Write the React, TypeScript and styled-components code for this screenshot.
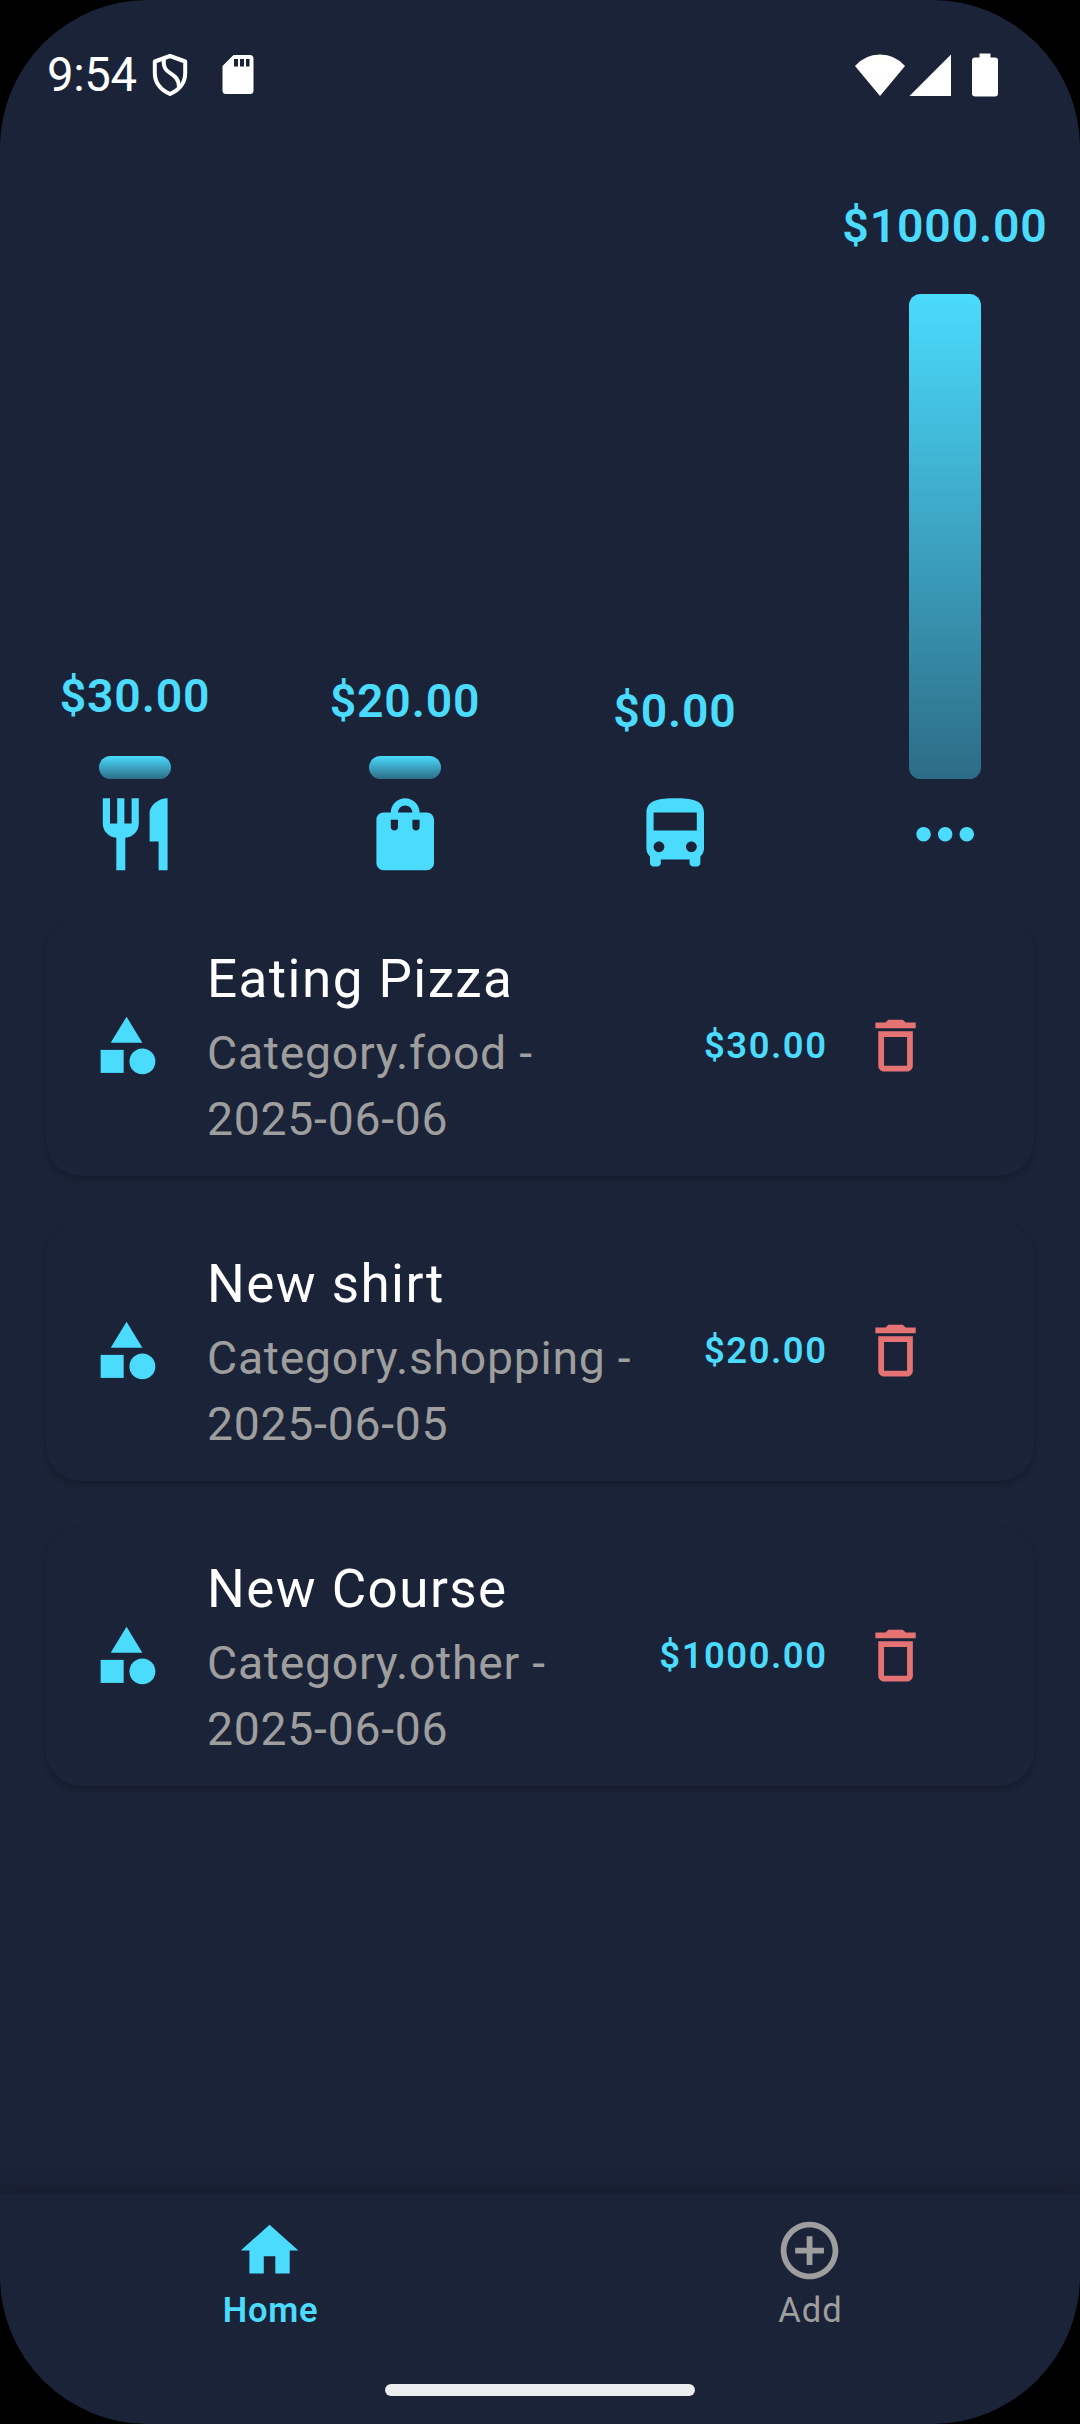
import React from "react";
import styled, { createGlobalStyle } from "styled-components";
import {
  MdRestaurant,
  MdShoppingBag,
  MdDirectionsBus,
  MdMoreHoriz,
  MdCategory,
  MdDeleteOutline,
  MdHome,
  MdAddCircleOutline,
} from "react-icons/md";
import type { IconType } from "react-icons";

const color = {
  surface: "#1b2338",
  accent: "#4adbfd",
  muted: "#9e9e9e",
  danger: "#e57373",
  text: "#ffffff",
};

const Global = createGlobalStyle`
  html, body { margin: 0; padding: 0; background: #000; }
  * { box-sizing: border-box; }
`;

const Screen = styled.div`
  display: flex;
  flex-direction: column;
  width: 1080px;
  height: 2424px;
  overflow: hidden;
  border-radius: 148px;
  background: ${color.surface};
  font-family: Roboto, sans-serif;
  color: ${color.text};
`;

const StatusBar = styled.header`
  display: flex;
  align-items: center;
  justify-content: space-between;
  flex: none;
  height: 150px;
  padding: 0 80px 0 47px;
`;

const StatusGroup = styled.div`
  display: flex;
  align-items: center;
`;

const Clock = styled.span`
  width: 105px;
  font-size: 47.3px;
  line-height: 56px;
  letter-spacing: -0.4px;
  white-space: nowrap;
`;

const Chart = styled.section`
  display: grid;
  grid-template-columns: repeat(4, 1fr);
  flex: none;
  height: 727px;
`;

const ChartColumn = styled.div`
  display: flex;
  flex-direction: column;
  align-items: center;
  justify-content: flex-end;
`;

const ChartValue = styled.span<{ $gap: number }>`
  margin-bottom: ${(p) => p.$gap}px;
  color: ${color.accent};
  font-size: 46.37px;
  font-weight: 600;
  line-height: 66px;
  letter-spacing: 0.85px;
`;

const Bar = styled.div`
  width: 72px;
  border-radius: 11.5px;
  background: linear-gradient(to bottom, ${color.accent}, #2d6c86);
`;

const ChartIcon = styled.div`
  display: flex;
  margin-top: 12px;
  color: ${color.accent};
`;

const Expenses = styled.main`
  display: flex;
  flex-direction: column;
  flex: 1;
  gap: 46px;
  min-height: 0;
  padding: 39.5px 46px 0;
`;

const Card = styled.article`
  display: flex;
  align-items: center;
  flex: none;
  height: 259px;
  padding: 0 69px 0 46px;
  border-radius: 35px;
  background: ${color.surface};
  box-shadow: 0 3px 6px rgba(0, 0, 0, 0.22);
`;

const Leading = styled.div`
  display: flex;
  flex: none;
  width: 115px;
  color: ${color.accent};
`;

const Details = styled.div`
  display: flex;
  flex: 1;
  flex-direction: column;
  min-width: 0;
`;

const Title = styled.h2`
  margin: 0;
  font-size: 53px;
  font-weight: 400;
  line-height: 79.5px;
  letter-spacing: 1.44px;
`;

const Meta = styled.p`
  margin: 0;
  color: ${color.muted};
  font-size: 46.37px;
  line-height: 66.2px;
  letter-spacing: 0.72px;
  white-space: pre-line;
`;

const Amount = styled.span`
  margin-right: -0.5px;
  padding-bottom: 2px;
  color: ${color.accent};
  font-size: 36.43px;
  font-weight: 600;
  letter-spacing: 1.52px;
`;

const DeleteButton = styled.button`
  display: flex;
  align-items: center;
  justify-content: center;
  width: 138px;
  height: 138px;
  padding: 0;
  border: 0;
  background: none;
  color: ${color.danger};
`;

const BottomNav = styled.nav`
  display: grid;
  grid-template-columns: 1fr 1fr;
  grid-template-rows: 190px 12px;
  flex: none;
  height: 230px;
  box-shadow: 0 -6px 20px rgba(0, 0, 0, 0.2);
`;

const NavItem = styled.div<{ $active?: boolean }>`
  display: flex;
  flex-direction: column;
  align-items: center;
  padding-top: 22px;
  color: ${(p) => (p.$active ? color.accent : color.muted)};
  font-size: 34.56px;
  font-weight: ${(p) => (p.$active ? 650 : 400)};
  line-height: 51px;
  letter-spacing: ${(p) => (p.$active ? 0.72 : 1)}px;
`;

const NavLabel = styled.span`
  padding-left: 1px;
`;

const HomeIndicator = styled.div`
  grid-column: 1 / -1;
  justify-self: center;
  width: 310px;
  border-radius: 6px;
  background: #ecedef;
`;

const ShieldIcon = () => (
  <svg width="36" height="44" viewBox="0 0 36 44" fill="none" stroke="#fff" strokeWidth="4" strokeLinejoin="round">
    <path d="M18 3 L2.8 8.5 V20 C2.8 29 8 36.500 18 41 C28 36.500 33.200 29 33.200 20 V8.500 Z" />
    <path d="M12 5.500 C9.500 24 26.500 17 27 34" />
  </svg>
);

const SdCardIcon = styled(({ className }: { className?: string }) => (
  <svg className={className} width="32" height="40" viewBox="0 0 32 40">
    <path
      fill="#fff"
      fillRule="evenodd"
      d="M11.500 0 H28 Q31.500 0 31.500 3.800 V35.500 Q31.500 39 28 39 H4 Q.5 39 .5 35.500 V11 Z M12 4 V11.500 H16 V4 Z M18 4 V11.500 H22 V4 Z M24 4 V11.500 H27.500 V4 Z"
    />
  </svg>
))`
  margin-left: 34px;
`;

const SystemIcons = () => (
  <svg width="146" height="44" viewBox="0 0 146 44" fill="#fff">
    <path d="M26 43 L1 13 Q11 1.500 26 1.500 Q41 1.500 51 13 Z" />
    <path d="M55.500 43 L97 1.500 V43 Z" />
    <path d="M125.500 .5 H136.500 V4.500 H141 Q144 4.500 144 7.500 V40.500 Q144 43.500 141 43.500 H121 Q118 43.500 118 40.500 V7.500 Q118 4.500 121 4.500 H125.500 Z" />
  </svg>
);

const columns: { value: string; bar: number; gap: number; Icon: IconType }[] = [
  { value: "$30.00", bar: 23, gap: 27, Icon: MdRestaurant },
  { value: "$20.00", bar: 23, gap: 22, Icon: MdShoppingBag },
  { value: "$0.00", bar: 0, gap: 35, Icon: MdDirectionsBus },
  { value: "$1000.00", bar: 485, gap: 35, Icon: MdMoreHoriz },
];

const expenses = [
  { title: "Eating Pizza", category: "food", date: "2025-06-06", amount: "$30.00" },
  { title: "New shirt", category: "shopping", date: "2025-06-05", amount: "$20.00" },
  { title: "New Course", category: "other", date: "2025-06-06", amount: "$1000.00" },
];

export default function App() {
  return (
    <>
      <Global />
      <Screen>
        <StatusBar>
          <StatusGroup>
            <Clock>9:54</Clock>
            <ShieldIcon />
            <SdCardIcon />
          </StatusGroup>
          <SystemIcons />
        </StatusBar>
        <Chart>
          {columns.map(({ value, bar, gap, Icon }) => (
            <ChartColumn key={value}>
              <ChartValue $gap={gap}>{value}</ChartValue>
              <Bar style={{ height: bar }} />
              <ChartIcon>
                <Icon size={86.4} />
              </ChartIcon>
            </ChartColumn>
          ))}
        </Chart>
        <Expenses>
          {expenses.map((e) => (
            <Card key={e.title}>
              <Leading>
                <MdCategory size={69.12} />
              </Leading>
              <Details>
                <Title>{e.title}</Title>
                <Meta>{`Category.${e.category} -\n${e.date}`}</Meta>
              </Details>
              <Amount>{e.amount}</Amount>
              <DeleteButton aria-label="Delete">
                <MdDeleteOutline size={69.12} />
              </DeleteButton>
            </Card>
          ))}
        </Expenses>
        <BottomNav>
          <NavItem $active>
            <MdHome size={69.12} />
            <NavLabel>Home</NavLabel>
          </NavItem>
          <NavItem>
            <MdAddCircleOutline size={69.12} />
            <NavLabel>Add</NavLabel>
          </NavItem>
          <HomeIndicator />
        </BottomNav>
      </Screen>
    </>
  );
}
